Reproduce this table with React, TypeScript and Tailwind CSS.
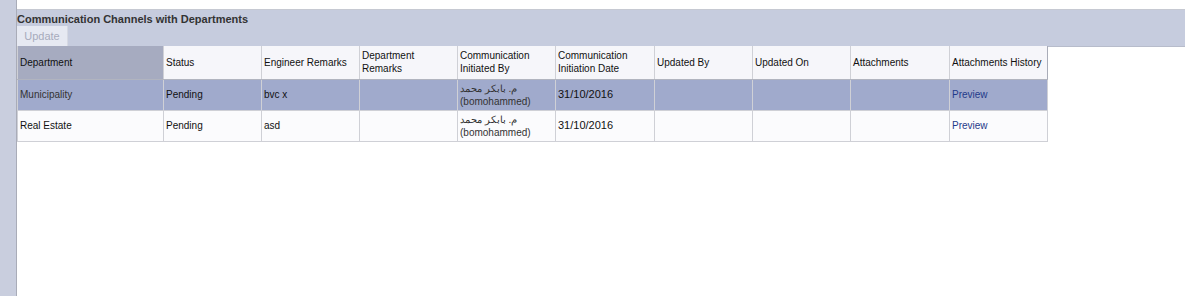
import React from 'react';

type Row = {
  department: string;
  status: string;
  engineerRemarks: string;
  departmentRemarks: string;
  initiatedBy: string;
  initiatedLogin: string;
  date: string;
  updatedBy: string;
  updatedOn: string;
  attachments: string;
};

const rows: Row[] = [
  {
    department: 'Municipality',
    status: 'Pending',
    engineerRemarks: 'bvc x',
    departmentRemarks: '',
    initiatedBy: 'م. بابكر محمد',
    initiatedLogin: '(bomohammed)',
    date: '31/10/2016',
    updatedBy: '',
    updatedOn: '',
    attachments: '',
  },
  {
    department: 'Real Estate',
    status: 'Pending',
    engineerRemarks: 'asd',
    departmentRemarks: '',
    initiatedBy: 'م. بابكر محمد',
    initiatedLogin: '(bomohammed)',
    date: '31/10/2016',
    updatedBy: '',
    updatedOn: '',
    attachments: '',
  },
];

const columns = [
  { label: 'Department', width: 'w-[146px]' },
  { label: 'Status', width: 'w-[98px]' },
  { label: 'Engineer Remarks', width: 'w-[98px]' },
  { label: 'Department Remarks', width: 'w-[98px]' },
  { label: 'Communication Initiated By', width: 'w-[98px]' },
  { label: 'Communication Initiation Date', width: 'w-[99px]' },
  { label: 'Updated By', width: 'w-[98px]' },
  { label: 'Updated On', width: 'w-[98px]' },
  { label: 'Attachments', width: 'w-[99px]' },
  { label: 'Attachments History', width: 'w-[98px]' },
];

const cell = 'border-r border-b border-[#cfd0d6] px-[2px] align-middle text-left';

export default function App() {
  return (
    <div className="flex h-[296px] w-[1185px] bg-white font-['Liberation_Sans',Arial,sans-serif] text-[10px] text-[#111]">
      {/* left rail */}
      <div className="w-[17px] shrink-0 border-r border-[#a9acb8] bg-[#c9cede]" />

      <div className="flex flex-1 flex-col">
        <div className="h-[10px] border-b border-[#c6c9d2] bg-white" />

        {/* panel header */}
        <div className="flex h-[37px] flex-col border-b border-[#b7bccb] bg-[#c6ccde]">
          <div className="h-[16px] pt-[2px] text-[11px] font-bold leading-[14px] text-[#333]">
            Communication Channels with Departments
          </div>
          <div className="flex">
            <div className="flex h-[20px] w-[51px] items-center justify-center border-r border-[#d6d9e3] bg-[#e6e9f2] text-[11px] text-[#a7abbc]">
              Update
            </div>
          </div>
        </div>

        <table className="-mt-px w-[1031px] table-fixed border-collapse border-l border-[#cfd0d6] leading-[13px]">
          <thead>
            <tr className="h-[33px]">
              {columns.map((c, i) => (
                <th
                  key={c.label}
                  className={`${cell} ${c.width} font-normal ${
                    i === 0 ? 'bg-[#a6abc0]' : 'bg-[#f6f6fa]'
                  } border-b-[#b1b4bf] ${i === columns.length - 1 ? 'border-r-[#a9acb8]' : ''}`}
                >
                  {c.label}
                </th>
              ))}
            </tr>
          </thead>
          <tbody>
            {rows.map((r, idx) => (
              <tr key={r.department} className={`h-[31px] ${idx === 0 ? 'bg-[#a0aacc]' : 'bg-[#fbfbfd]'}`}>
                <td className={`${cell} ${idx === 0 ? 'text-[#333]' : ''}`}>{r.department}</td>
                <td className={cell}>{r.status}</td>
                <td className={cell}>{r.engineerRemarks}</td>
                <td className={cell}>{r.departmentRemarks}</td>
                <td className={`${cell} text-[#333]`}>
                  <div dir="rtl" className="text-left">
                    {r.initiatedBy}
                  </div>
                  <div>{r.initiatedLogin}</div>
                </td>
                <td className={`${cell} text-[11px]`}>{r.date}</td>
                <td className={cell}>{r.updatedBy}</td>
                <td className={cell}>{r.updatedOn}</td>
                <td className={cell}>{r.attachments}</td>
                <td className={`${cell} text-[#1f3a8a]`}>Preview</td>
              </tr>
            ))}
          </tbody>
        </table>
      </div>
    </div>
  );
}
